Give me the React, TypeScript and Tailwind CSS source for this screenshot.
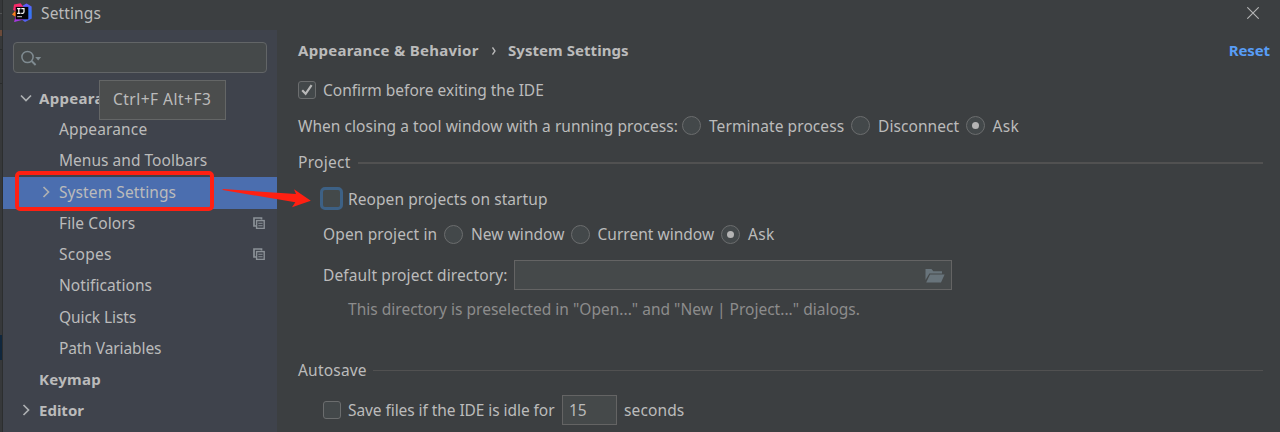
import type { ReactNode } from "react";

function Chevron({ down = false }: { down?: boolean }) {
  return (
    <svg width="12" height="12" viewBox="0 0 12 12" fill="none" stroke="#adb0b2" strokeWidth="1.7" className="shrink-0">
      <path d={down ? "M1 3.5 L6 8.5 L11 3.5" : "M3.5 1 L8.5 6 L3.5 11"} />
    </svg>
  );
}

function CopyIcon() {
  return (
    <svg width="12" height="12" viewBox="0 0 12 12" className="ml-auto mr-[12.5px] shrink-0" fill="none" stroke="#8b9197">
      <path d="M8.5 2.5 V1 H1 V9 H3" strokeWidth="1.7" />
      <rect x="3.6" y="3.6" width="7.6" height="7.8" strokeWidth="1.4" />
      <path d="M5.3 6.3 H9.6 M5.3 8.7 H9.6" strokeWidth="1.1" />
    </svg>
  );
}

function Logo() {
  return (
    <svg width="20" height="20" viewBox="0 0 20 20" className="shrink-0">
      <defs>
        <linearGradient id="pink" x1="0" y1="0" x2="1" y2="1">
          <stop offset="0" stopColor="#fe2857" />
          <stop offset="1" stopColor="#e8319a" />
        </linearGradient>
        <linearGradient id="blue" x1="0" y1="0" x2="0" y2="1">
          <stop offset="0" stopColor="#6b57ff" />
          <stop offset="0.5" stopColor="#2f7bf5" />
          <stop offset="1" stopColor="#5a5cf0" />
        </linearGradient>
      </defs>
      <path d="M11 2.5 L14.5 0.4 L19.6 3.5 L19.8 15.5 L13 19 L9 16 Z" fill="url(#blue)" />
      <path d="M2 1.6 L8.5 0.2 L12 4.5 L5 9 L1.2 7 Z" fill="url(#pink)" />
      <path d="M0 11.5 L3.5 7.5 L4.5 14.5 Z" fill="#fc801d" />
      <path d="M3.5 13 L9 15 L2.2 19 Z" fill="#c32fd0" />
      <path d="M2.2 19 L4 15 H14 L10 17 Z" fill="#a23be0" />
      <rect x="3.7" y="3.9" width="12.6" height="12.4" fill="#050507" />
      <path d="M5.1 5.7 H8.5 M5.1 10.3 H8.5 M6.8 5.7 V10.3 M9.3 5.7 H12 V8.8 Q12 10.3 10.6 10.3 H9.2" fill="none" stroke="#fff" strokeWidth="1.2" />
      <path d="M5.2 13.7 H10" stroke="#c9c9c9" strokeWidth="1" />
    </svg>
  );
}

function Radio({ on = false }: { on?: boolean }) {
  return (
    <span className="flex size-[19px] shrink-0 items-center justify-center rounded-full border border-[#6b6d6e] bg-[#43484a]">
      {on && <span className="size-[7px] rounded-full bg-[#b4b4b4]" />}
    </span>
  );
}

function CheckBox({ on = false }: { on?: boolean }) {
  return (
    <span className="flex size-[18px] shrink-0 items-center justify-center rounded-[3px] border border-[#6b6d6e] bg-[#43484a]">
      {on && (
        <svg width="12" height="12" viewBox="0 0 12 12" fill="none" stroke="#b8b8b8" strokeWidth="2.2">
          <path d="M1.2 6.3 L4.6 9.8 L10.6 1.2" />
        </svg>
      )}
    </span>
  );
}

function Leaf({ children, copy = false }: { children: ReactNode; copy?: boolean }) {
  return (
    <div className="flex h-[31.25px] items-center pb-[2px] pl-[56px]">
      {children}
      {copy && <CopyIcon />}
    </div>
  );
}

export default function App() {
  return (
    <div className="relative flex h-[432px] w-[1280px] overflow-hidden bg-[#3c3f41] font-['Noto_Sans','Open_Sans',sans-serif] text-[15.5px] leading-[20px] whitespace-nowrap text-[#bbbbbb]">
      <div className="flex w-[3px] shrink-0 flex-col border-r border-[#2c2e2f] bg-[#36383a]">
        <div className="mt-[13px] h-px bg-[#515354]" />
        <div className="mt-[16px] h-[6px] bg-[#6b4a3a]" />
        <div className="mt-[13px] h-px bg-[#292b2c]" />
        <div className="mt-[33px] h-px bg-[#292b2c]" />
        <div className="mt-[251px] h-[25px] bg-[#10273d]" />
      </div>

      <div className="flex min-w-0 flex-1 flex-col">
        <header className="flex h-[30px] shrink-0 items-center pb-[5px] pl-[9px] pr-[21px]">
          <Logo />
          <span className="ml-[9px] tracking-[0.12px]">Settings</span>
          <svg width="12" height="12" viewBox="0 0 12 12" className="ml-auto" stroke="#b4b5b6" strokeWidth="1.1">
            <path d="M0.3 0.3 L11.7 11.7 M11.7 0.3 L0.3 11.7" />
          </svg>
        </header>

        <div className="flex flex-1">
          <aside className="flex w-[274px] shrink-0 flex-col bg-[#3f434c]">
            <div className="ml-[10px] mt-[12px] flex h-[31px] w-[254px] shrink-0 items-center rounded-[4px] border border-[#626567] bg-[#45494a] pl-[7px]">
              <svg width="22" height="16" viewBox="0 0 22 16" fill="none" stroke="#7f8b91" strokeWidth="1.5">
                <circle cx="6.5" cy="7" r="5.6" />
                <path d="M10.6 11 L14.6 15" strokeWidth="1.9" />
                <path d="M14.2 7 H20.2 L17.2 10.4 Z" fill="#7f8b91" stroke="none" />
              </svg>
            </div>

            <nav className="mt-[10.25px] flex flex-col">
              <div className="flex h-[31.25px] items-center pb-[2px] pl-[17px] text-[15px] font-bold">
                <Chevron down />
                <span className="ml-[7px] w-[60px] overflow-hidden tracking-[0.31px]">Appearance</span>
              </div>
              <Leaf><span className="tracking-[0.13px]">Appearance</span></Leaf>
              <Leaf><span className="tracking-[0.03px]">Menus and Toolbars</span></Leaf>
              <div className="-mb-[0.75px] flex h-[32px] items-center bg-[#4b6eaf] pb-[2px] pl-[37px]">
                <Chevron />
                <span className="ml-[7px] tracking-[0.09px]">System Settings</span>
              </div>
              <Leaf copy><span className="tracking-[0.1px]">File Colors</span></Leaf>
              <Leaf copy><span className="tracking-[0.3px]">Scopes</span></Leaf>
              <Leaf><span className="tracking-[0.07px]">Notifications</span></Leaf>
              <Leaf><span className="tracking-[-0.07px]">Quick Lists</span></Leaf>
              <Leaf><span className="tracking-[-0.1px]">Path Variables</span></Leaf>
              <div className="flex h-[31.25px] items-center pb-[2px] pl-[36px] text-[15px] font-bold tracking-[0.3px]">Keymap</div>
              <div className="flex h-[31.25px] items-center pb-[2px] pl-[17px] text-[15px] font-bold">
                <Chevron />
                <span className="ml-[7px]">Editor</span>
              </div>
            </nav>
          </aside>

          <main className="flex min-w-0 flex-1 flex-col pl-[21px]">
            <div className="flex h-[41px] items-center pb-[2px] pr-[10px] text-[15px] font-bold">
              <span className="w-[194px] tracking-[0.27px]">Appearance &amp; Behavior</span>
              <svg width="4" height="8" viewBox="0 0 4 8" fill="none" stroke="#bbbbbb" strokeWidth="1.3" className="relative top-px">
                <path d="M0.5 0.5 L3 4 L0.5 7.5" />
              </svg>
              <span className="ml-[12px] tracking-[0.05px]">System Settings</span>
              <span className="ml-auto tracking-[-0.1px] text-[#589df6]">Reset</span>
            </div>

            <div className="flex h-[38px] items-center">
              <CheckBox on />
              <span className="ml-[7px] tracking-[-0.02px]">Confirm before exiting the IDE</span>
            </div>

            <div className="flex h-[33px] items-center">
              <span className="w-[384px] tracking-[0.04px]">When closing a tool window with a running process:</span>
              <Radio />
              <span className="ml-[8px] w-[142px] tracking-[0.08px]">Terminate process</span>
              <Radio />
              <span className="ml-[8px] w-[87.5px] tracking-[0.08px]">Disconnect</span>
              <Radio on />
              <span className="ml-[8px] tracking-[0.3px]">Ask</span>
            </div>

            <div className="flex h-[41px] items-center pr-[17px]">
              <span className="relative -top-px w-[60px] tracking-[0.3px]">Project</span>
              <div className="h-[2px] flex-1 bg-[#515151]" />
            </div>

            <div className="flex h-[31px] items-center pl-[22px]">
              <span className="size-[23px] rounded-[5px] border-[3px] border-[#3d6185] bg-[#43494a]" />
              <span className="ml-[5px] tracking-[0.07px]">Reopen projects on startup</span>
            </div>

            <div className="flex h-[40px] items-center pl-[25px]">
              <span className="w-[121px] tracking-[0.13px]">Open project in</span>
              <Radio />
              <span className="ml-[8px] w-[100px] tracking-[0.05px]">New window</span>
              <Radio />
              <span className="ml-[7.5px] w-[123.5px] tracking-[0.02px]">Current window</span>
              <Radio on />
              <span className="ml-[8px] tracking-[0.3px]">Ask</span>
            </div>

            <div className="flex h-[42px] items-center pl-[25px]">
              <span className="w-[191px] tracking-[0.12px]">Default project directory:</span>
              <div className="flex h-[30px] w-[438px] items-center justify-end border border-[#646464] bg-[#45494a] pr-[6px]">
                <svg width="20" height="15" viewBox="0 0 20 15" fill="#68747b">
                  <path d="M0.5 12 V1 H6.5 L8.3 3.3 H17 V5.4 H4.4 Z" />
                  <path d="M5 6.4 H19.6 L16 14.4 H1.2 Z" />
                </svg>
              </div>
            </div>

            <div className="flex h-[25px] items-center pl-[50px] tracking-[0.015px] text-[#8c8c8c]">
              This directory is preselected in "Open..." and "New | Project..." dialogs.
            </div>

            <div className="mt-[34px] flex h-[31px] items-center pr-[17px]">
              <span className="relative -top-px w-[75px] tracking-[0.2px]">Autosave</span>
              <div className="h-px flex-1 bg-[#515151]" />
            </div>

            <div className="flex h-[48px] items-center pl-[25px]">
              <CheckBox />
              <span className="ml-[7px] w-[214px] tracking-[-0.07px]">Save files if the IDE is idle for</span>
              <div className="flex h-[30px] w-[55px] items-center border border-[#646464] bg-[#45494a] pl-[6px]">15</div>
              <span className="ml-[7px] tracking-[0.12px]">seconds</span>
            </div>
          </main>
        </div>
      </div>

      <div className="absolute left-[99px] top-[80px] flex h-[40px] w-[127px] items-center border border-[#646666] bg-[#4b4d4d] pb-[2px] pl-[13px] tracking-[0.48px]">
        Ctrl+F Alt+F3
      </div>

      <div className="absolute left-[15px] top-[171px] h-[40px] w-[199px] rounded-[5px] border-4 border-[#ff2012]" />
      <svg width="90" height="20" viewBox="0 0 90 20" className="absolute left-[222px] top-[188px]">
        <path d="M0.7 1 L74 6 L72 1.3 L88.8 12.7 L70 19.3 L73.3 14.3 L0.7 2 Z" fill="#ff2012" />
      </svg>
    </div>
  );
}
